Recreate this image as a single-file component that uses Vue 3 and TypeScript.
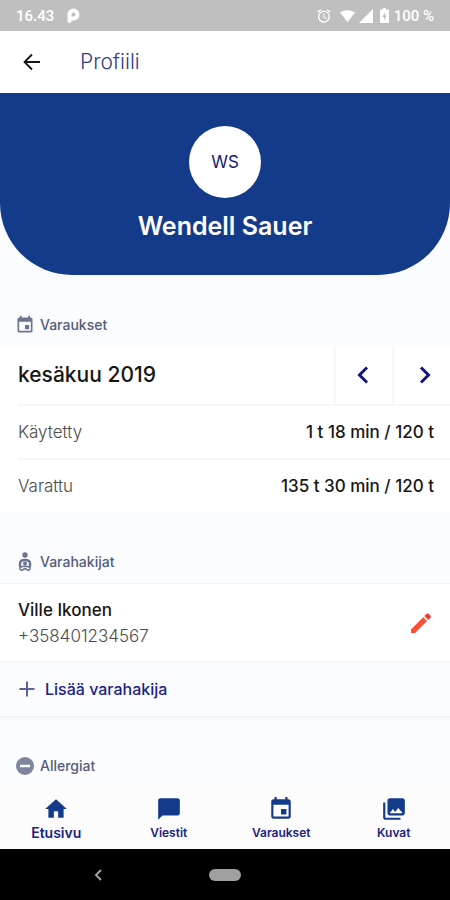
<script setup lang="ts">
import { computed, ref } from 'vue'

interface Usage {
  label: string
  value: string
}

interface Tab {
  id: string
  label: string
  path: string
}

const user = { name: 'Wendell Sauer', initials: 'WS' }

const months = ['tammikuu', 'helmikuu', 'maaliskuu', 'huhtikuu', 'toukokuu', 'kesäkuu', 'heinäkuu', 'elokuu', 'syyskuu', 'lokakuu', 'marraskuu', 'joulukuu']
const monthIndex = ref(2019 * 12 + 5)
const monthLabel = computed(() => `${months[monthIndex.value % 12]} ${Math.floor(monthIndex.value / 12)}`)

const usage: Usage[] = [
  { label: 'Käytetty', value: '1 t 18 min / 120 t' },
  { label: 'Varattu', value: '135 t 30 min / 120 t' },
]

const contacts = [{ name: 'Ville Ikonen', phone: '+358401234567' }]

const calendarPath = 'M17 12h-5v5h5v-5zM16 1v2H8V1H6v2H5c-1.11 0-1.99.9-1.99 2L3 19c0 1.1.89 2 2 2h14c1.1 0 2-.9 2-2V5c0-1.1-.9-2-2-2h-1V1h-2zm3 18H5V8h14v11z'

const tabs: Tab[] = [
  { id: 'home', label: 'Etusivu', path: 'M10 20v-6h4v6h5v-8h3L12 3 2 12h3v8z' },
  { id: 'messages', label: 'Viestit', path: 'M20 2H4c-1.1 0-2 .9-2 2v18l4-4h14c1.1 0 2-.9 2-2V4c0-1.1-.9-2-2-2z' },
  { id: 'bookings', label: 'Varaukset', path: calendarPath },
  { id: 'photos', label: 'Kuvat', path: 'M22 16V4c0-1.1-.9-2-2-2H8c-1.1 0-2 .9-2 2v12c0 1.1.9 2 2 2h12c1.1 0 2-.9 2-2zm-11-4l2.03 2.71L16 11l4 5H8l3-4zM2 6v14c0 1.1.9 2 2 2h14v-2H4V6H2z' },
]
const activeTab = ref('home')
</script>

<template>
  <div class="screen">
    <div class="status">
      <span>16.43</span>
      <svg class="status-app" width="14" height="16" viewBox="0 0 14 16" aria-hidden="true">
        <path d="M3.500 13V6.500a4 4 0 1 1 4 4H6" fill="none" stroke="#fff" stroke-width="4" stroke-linecap="round" stroke-linejoin="round" />
      </svg>
      <div class="status-right">
        <svg class="alarm" width="16" height="16" viewBox="0 0 24 24" aria-hidden="true">
          <path fill="#fff" d="M22 5.720l-4.600-3.860-1.290 1.530 4.600 3.860L22 5.720zM7.880 3.390L6.600 1.860 2 5.710l1.290 1.530 4.590-3.850zM12.500 8H11v6l4.750 2.850.75-1.230-4-2.370V8zM12 4c-4.970 0-9 4.030-9 9s4.020 9 9 9a9 9 0 0 0 0-18zm0 16c-3.870 0-7-3.130-7-7s3.130-7 7-7 7 3.130 7 7-3.130 7-7 7z" />
        </svg>
        <svg width="15" height="14" viewBox="0 0 15 14" aria-hidden="true"><path fill="#fff" d="M0 3.500Q7.500-1.500 15 3.500L7.500 13z" /></svg>
        <svg width="14" height="14" viewBox="0 0 14 14" aria-hidden="true"><path fill="#fff" d="M14 0v14H0z" /></svg>
        <svg class="battery" width="9" height="15" viewBox="0 0 9 15" aria-hidden="true">
          <path fill="#fff" d="M3 0h3v1.500h2q1 0 1 1V14q0 1-1 1H1q-1 0-1-1V2.500q0-1 1-1h2z" />
          <path fill="#bfbfbf" d="M5 4L2.500 9h1.700v3.500L6.700 7.500H5z" />
        </svg>
        <span>100 %</span>
      </div>
    </div>

    <header class="appbar">
      <button class="back" type="button" aria-label="Takaisin">
        <svg width="24" height="24" viewBox="0 0 24 24" aria-hidden="true">
          <path d="M20 12H5M12 4.500L4.500 12l7.500 7.500" fill="none" stroke="#151515" stroke-width="1.800" />
        </svg>
      </button>
      <h1>Profiili</h1>
    </header>

    <main>
      <section class="hero">
        <div class="avatar">{{ user.initials }}</div>
        <h2>{{ user.name }}</h2>
      </section>

      <section>
        <h3 class="heading">
          <svg width="20" height="20" viewBox="0 0 24 24" aria-hidden="true"><path fill="#6b7590" :d="calendarPath" /></svg>
          Varaukset
        </h3>
        <div class="panel">
          <div class="month">
            <strong>{{ monthLabel }}</strong>
            <button type="button" aria-label="Edellinen kuukausi" @click="monthIndex--">
              <svg width="20" height="20" viewBox="0 0 20 20" aria-hidden="true"><path d="M13 2.500L5.500 10l7.500 7.500" /></svg>
            </button>
            <button type="button" aria-label="Seuraava kuukausi" @click="monthIndex++">
              <svg width="20" height="20" viewBox="0 0 20 20" aria-hidden="true"><path d="M9 2.500l7.500 7.500L9 17.500" /></svg>
            </button>
          </div>
          <dl class="usage">
            <div v-for="item in usage" :key="item.label" class="usage-row">
              <dt>{{ item.label }}</dt>
              <dd>{{ item.value }}</dd>
            </div>
          </dl>
        </div>
      </section>

      <section>
        <h3 class="heading">
          <svg width="20" height="20" viewBox="0 0 20 20" aria-hidden="true">
            <circle cx="10" cy="3" r="2.700" fill="#6b7590" />
            <path d="M5 14v-2.500Q5 8 10 8t5 3.500V14" fill="none" stroke="#6b7590" stroke-width="2.400" stroke-linecap="round" />
            <circle cx="10" cy="11.500" r="2" fill="#6b7590" />
            <path d="M5 15.500q5-2.500 10 0M5 16.500q0 2 2.500 1.500L10 16.500l2.500 1.500q2.500.5 2.500-1.500" fill="none" stroke="#6b7590" stroke-width="1.600" stroke-linecap="round" />
          </svg>
          Varahakijat
        </h3>
        <div class="panel bordered">
          <div v-for="contact in contacts" :key="contact.phone" class="contact">
            <div>
              <div class="contact-name">{{ contact.name }}</div>
              <div class="contact-phone">{{ contact.phone }}</div>
            </div>
            <button type="button" class="edit" aria-label="Muokkaa">
              <svg width="22" height="22" viewBox="0 0 22 22" aria-hidden="true">
                <path d="M1.200 17.200L13.200 5.200l3.800 3.800-12 12-3 .2q-1.200 0-1.100-1.200z" fill="#fa4f38" />
                <path d="M14.400 4l2-2q1.200-1 2.400 0l1.500 1.500q1.100 1.200 0 2.400l-2 2z" fill="#f0402c" />
              </svg>
            </button>
          </div>
        </div>
        <button type="button" class="add">
          <svg width="18" height="18" viewBox="0 0 18 18" aria-hidden="true"><path d="M9 1.500v15M1.500 9h15" stroke="#5a6299" stroke-width="2" /></svg>
          Lisää varahakija
        </button>
      </section>

      <section>
        <h3 class="heading last">
          <svg width="20" height="20" viewBox="0 0 20 20" aria-hidden="true">
            <circle cx="10" cy="10" r="9" fill="#7d869c" />
            <path d="M5 10h10" stroke="#fbfcfe" stroke-width="2.500" />
          </svg>
          Allergiat
        </h3>
      </section>
    </main>

    <footer>
      <nav class="tabs">
        <a v-for="tab in tabs" :key="tab.id" :href="'#' + tab.id" :class="{ active: tab.id === activeTab }" @click.prevent="activeTab = tab.id">
          <svg width="26" height="26" viewBox="0 0 24 24" aria-hidden="true"><path :d="tab.path" /></svg>
          <span>{{ tab.label }}</span>
        </a>
      </nav>
      <div class="system">
        <svg width="10" height="14" viewBox="0 0 10 14" aria-hidden="true"><path d="M8 2L3 7l5 5" fill="none" stroke="#a3a3a3" stroke-width="2" /></svg>
        <span class="pill"></span>
        <span></span>
      </div>
    </footer>
  </div>
</template>

<style>
body {
  margin: 0;
}
</style>

<style scoped>
.screen {
  display: flex;
  flex-direction: column;
  min-height: 100vh;
  background: #fafcfe;
  color: #161616;
  font-family: Inter, "Liberation Sans", sans-serif;
}
h1, h2, h3, dl, dd {
  margin: 0;
}
button {
  border: 0;
  padding: 0;
  background: none;
  font: inherit;
  cursor: pointer;
}
svg {
  display: block;
  flex: none;
}
.status {
  display: flex;
  align-items: center;
  gap: 12px;
  height: 31px;
  padding: 0 16px;
  background: #bfbfbf;
  color: #fff;
  font: 500 15px/20px Roboto, sans-serif;
}
.status-right {
  display: flex;
  align-items: center;
  gap: 4px;
  margin-left: auto;
}
.alarm {
  margin-right: 4px;
}
.battery {
  margin: 0 1px 0 3px;
}
.appbar {
  display: flex;
  align-items: center;
  gap: 36px;
  height: 62px;
  padding: 0 20px;
  background: #fff;
}
.appbar h1 {
  color: #343c8c;
  font-size: 21px;
  font-weight: 300;
  line-height: 28px;
}
main {
  flex: 1;
}
.hero {
  display: flex;
  flex-direction: column;
  align-items: center;
  gap: 12px;
  padding: 33px 16px;
  border-radius: 0 0 72px 72px;
  background: #143b8a;
}
.avatar {
  display: grid;
  place-items: center;
  width: 72px;
  height: 72px;
  border-radius: 50%;
  background: #fff;
  color: #151a72;
  font-size: 17px;
}
.hero h2 {
  color: #fff;
  font-size: 25px;
  font-weight: 600;
  line-height: 32px;
}
.heading {
  display: flex;
  align-items: center;
  gap: 5px;
  padding: 40px 15px 11px;
  color: #545c7c;
  font-size: 14px;
  font-weight: 500;
  line-height: 20px;
}
.heading.last {
  padding-top: 38px;
  padding-bottom: 10px;
}
.panel {
  background: #fff;
}
.bordered {
  border: solid #f1f3f6;
  border-width: 1px 0;
}
.month {
  display: grid;
  grid-template-columns: 1fr 58px 58px;
  height: 58px;
  padding-left: 18px;
}
.month strong {
  align-self: center;
  font-size: 21px;
  font-weight: 500;
  line-height: 28px;
}
.month button {
  display: grid;
  place-items: center;
  border-left: 2px solid #f7f8fa;
}
.month path {
  fill: none;
  stroke: #151582;
  stroke-width: 3;
}
.usage-row {
  display: flex;
  align-items: center;
  justify-content: space-between;
  height: 52px;
  margin-left: 18px;
  padding-right: 16px;
  border-top: 2px solid #f5f6f8;
  font-size: 17px;
  line-height: 24px;
}
dt, .contact-phone {
  color: #4b4b4b;
  font-weight: 300;
}
dd {
  font-weight: 500;
}
.contact {
  display: flex;
  align-items: center;
  justify-content: space-between;
  padding: 13px 18px 12px;
  font-size: 17px;
  line-height: 26px;
}
.contact-name {
  font-weight: 500;
}
.add {
  display: flex;
  align-items: center;
  gap: 9px;
  width: 100%;
  height: 56px;
  padding: 0 18px;
  border-bottom: 2px solid #f3f4f7;
  color: #1c2384;
  font-size: 16px;
  font-weight: 500;
}
.tabs {
  display: grid;
  grid-template-columns: repeat(4, 1fr);
  height: 63px;
  background: #fcfcfc;
}
.tabs a {
  display: flex;
  flex-direction: column;
  align-items: center;
  padding-top: 10px;
  color: #1b2381;
  font-size: 12px;
  font-weight: 600;
  line-height: 22px;
  text-decoration: none;
}
.tabs path {
  fill: #143b8a;
}
.tabs .active {
  font-size: 14px;
}
.system {
  display: grid;
  grid-template-columns: 1fr 60px 1fr;
  align-items: center;
  justify-items: center;
  height: 52px;
  background: #000;
}
.pill {
  width: 32px;
  height: 12px;
  border-radius: 6px;
  background: #a0a0a0;
}
</style>
